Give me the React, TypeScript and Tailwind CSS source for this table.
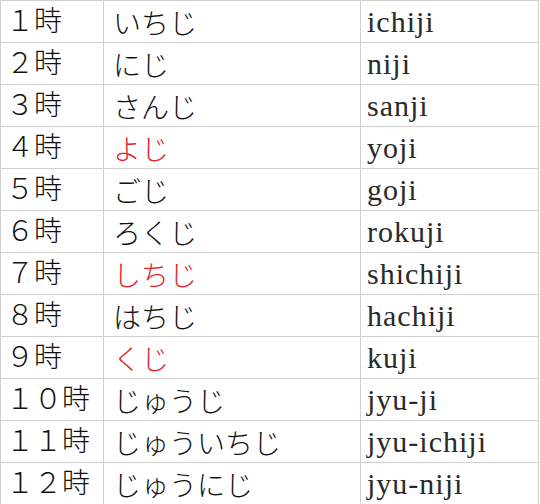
const rows = [
  { num: "１時", kana: "いちじ", roma: "ichiji", red: false },
  { num: "２時", kana: "にじ", roma: "niji", red: false },
  { num: "３時", kana: "さんじ", roma: "sanji", red: false },
  { num: "４時", kana: "よじ", roma: "yoji", red: true },
  { num: "５時", kana: "ごじ", roma: "goji", red: false },
  { num: "６時", kana: "ろくじ", roma: "rokuji", red: false },
  { num: "７時", kana: "しちじ", roma: "shichiji", red: true },
  { num: "８時", kana: "はちじ", roma: "hachiji", red: false },
  { num: "９時", kana: "くじ", roma: "kuji", red: true },
  { num: "１０時", kana: "じゅうじ", roma: "jyu-ji", red: false },
  { num: "１１時", kana: "じゅういちじ", roma: "jyu-ichiji", red: false },
  { num: "１２時", kana: "じゅうにじ", roma: "jyu-niji", red: false },
];

export default function App() {
  return (
    <div className="w-[540px] h-[504px] overflow-hidden bg-white">
      <div className="w-[539px] border-t border-l border-r border-[#d0d0d0]">
        {rows.map((r) => (
          <div
            key={r.roma}
            className="grid grid-cols-[103px_257px_1fr] h-[42px] border-b border-[#d0d0d0] text-[#111]"
          >
            <div
              className="flex items-center pl-[5px] border-r border-[#d0d0d0] text-[28px] leading-none font-light"
              style={{ fontFamily: '"Liberation Serif", "Noto Sans CJK JP", serif' }}
            >
              {r.num}
            </div>
            <div
              className={`flex items-center pl-[9px] border-r border-[#d0d0d0] text-[28px] leading-none font-light ${
                r.red ? "text-[#e3242b]" : ""
              }`}
              style={{ fontFamily: '"Noto Sans CJK JP", sans-serif' }}
            >
              {r.kana}
            </div>
            <div
              className="flex items-center pl-[6px] pt-[1px] text-[30px] leading-none tracking-[1px] text-[#2a2a2a]"
              style={{ fontFamily: '"Liberation Serif", serif' }}
            >
              {r.roma}
            </div>
          </div>
        ))}
      </div>
    </div>
  );
}
